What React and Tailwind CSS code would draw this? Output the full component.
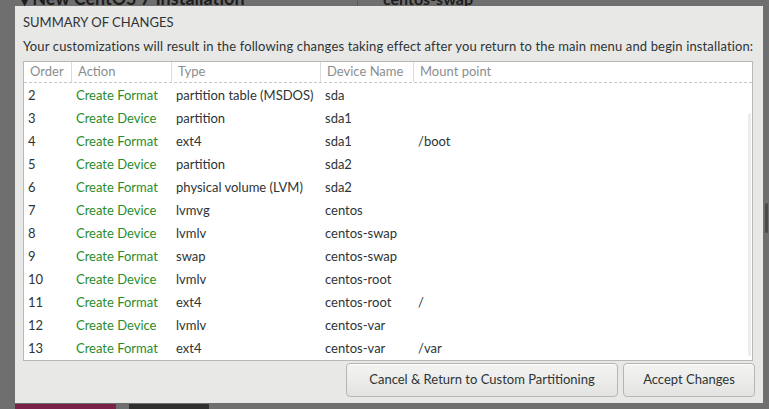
const rows = [
  ['2', 'Create Format', 'partition table (MSDOS)', 'sda', ''],
  ['3', 'Create Device', 'partition', 'sda1', ''],
  ['4', 'Create Format', 'ext4', 'sda1', '/boot'],
  ['5', 'Create Device', 'partition', 'sda2', ''],
  ['6', 'Create Format', 'physical volume (LVM)', 'sda2', ''],
  ['7', 'Create Device', 'lvmvg', 'centos', ''],
  ['8', 'Create Device', 'lvmlv', 'centos-swap', ''],
  ['9', 'Create Format', 'swap', 'centos-swap', ''],
  ['10', 'Create Device', 'lvmlv', 'centos-root', ''],
  ['11', 'Create Format', 'ext4', 'centos-root', '/'],
  ['12', 'Create Device', 'lvmlv', 'centos-var', ''],
  ['13', 'Create Format', 'ext4', 'centos-var', '/var'],
];

// column widths measured off the header separators
const cols = ['w-[48px]', 'w-[100px]', 'w-[149px]', 'w-[93px]', 'flex-1'];

export default function App() {
  return (
    <div
      className="relative w-[769px] h-[409px] overflow-hidden bg-[#6f6f6f] text-[#2e3436]"
      style={{ fontFamily: 'Lato, "DejaVu Sans", sans-serif' }}
    >
      {/* page behind the dialog */}
      <div className="absolute left-[20px] top-[-11px] text-[18px] font-bold text-[#1d1d1d] leading-[18px] whitespace-nowrap">
        <span className="text-[12px] mr-[3px]">▼</span>New CentOS 7 Installation
      </div>
      <div className="absolute left-[357px] top-0 h-[6px] w-px bg-[#5a5a5a]" />
      <div className="absolute left-[383px] top-[-10px] text-[16px] font-bold text-[#1d1d1d] leading-[18px]">
        centos-swap
      </div>
      <div className="absolute left-[15px] top-[404px] h-[5px] w-[101px] bg-[#7a2148]" />
      <div className="absolute left-[129px] top-[404px] h-[5px] w-[80px] bg-[#2f2f2f]" />
      <div className="absolute left-[765px] top-[203px] h-[30px] w-[3px] rounded bg-[#4a4a4a]" />

      {/* dialog */}
      <div className="absolute left-[15px] top-[6px] w-[748px] h-[397px] bg-[#e8e8e7] flex flex-col pl-[8px] pr-[10px] text-[13px]">
        <div className="mt-[7px] h-[18px] leading-[18px]">SUMMARY OF CHANGES</div>
        <div className="mt-[6px] h-[18px] leading-[18px] whitespace-nowrap tracking-[0.14px]">
          Your customizations will result in the following changes taking effect after you return to the main menu and begin installation:
        </div>
        <div className="mt-[6px] h-[300px] bg-white border border-[#b8b8b5] flex flex-col relative">
          <div className="flex h-[25px] text-[#8b8e8f] border-b border-dashed border-[#c8c8c8]">
            {['Order', 'Action', 'Type', 'Device Name', 'Mount point'].map((h, i) => (
              <div
                key={h}
                className={`${cols[i]} flex items-center pl-[6px] whitespace-nowrap ${i < 4 ? 'border-r border-[#dcdcdc]' : ''}`}
              >
                {h}
              </div>
            ))}
          </div>
          <div className="flex flex-col pt-[1px]">
            {rows.map((r) => (
              <div key={r[0]} className="flex h-[23px] items-center whitespace-nowrap">
                <div className={`${cols[0]} pl-[4px]`}>{r[0]}</div>
                <div className={`${cols[1]} pl-[4px] text-[#2a8c2a]`}>{r[1]}</div>
                <div className={`${cols[2]} pl-[4px]`}>{r[2]}</div>
                <div className={`${cols[3]} pl-[4px]`}>{r[3]}</div>
                <div className={`${cols[4]} pl-[4px]`}>{r[4]}</div>
              </div>
            ))}
          </div>
          {/* scrollbar trough */}
          <div className="absolute right-[1px] top-[51px] bottom-[4px] w-[3px] rounded bg-[#ececec]" />
        </div>
        <div className="mt-[2px] flex justify-end gap-[5px] mr-[-2px]">
          <button className="w-[272px] h-[34px] rounded-[4px] border border-[#b6b6b3] bg-gradient-to-b from-[#f4f4f3] to-[#e3e3e1] shadow-[0_1px_0_rgba(255,255,255,0.8)_inset]">
            Cancel &amp; Return to Custom Partitioning
          </button>
          <button className="w-[132px] h-[34px] rounded-[4px] border border-[#b6b6b3] bg-gradient-to-b from-[#f4f4f3] to-[#e3e3e1] shadow-[0_1px_0_rgba(255,255,255,0.8)_inset]">
            Accept Changes
          </button>
        </div>
      </div>
    </div>
  );
}
